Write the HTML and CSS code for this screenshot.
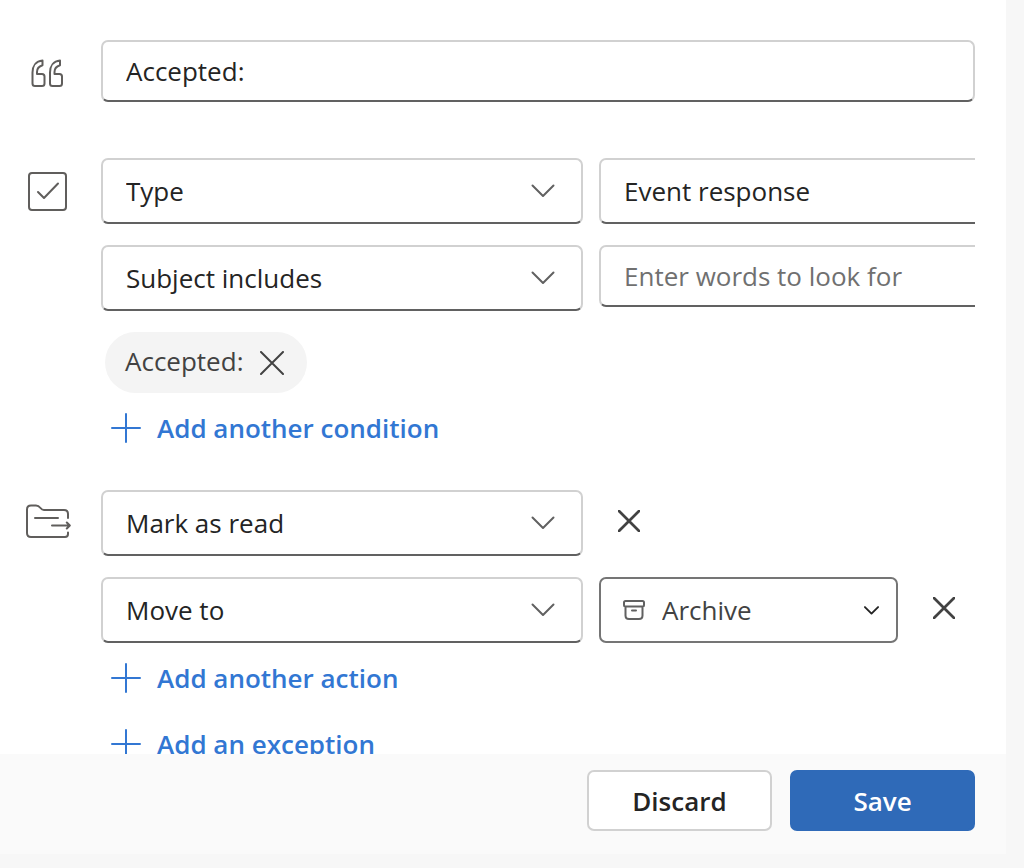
FILE: index.html
```html
<!DOCTYPE html>
<html lang="en">
<head>
<meta charset="utf-8">
<meta name="viewport" content="width=device-width, initial-scale=1">
<title>Edit rule</title>
<link rel="stylesheet" href="styles.css">
</head>
<body>
<svg class="sprite" aria-hidden="true">
  <symbol id="chevron" viewBox="0 0 24 14"><path d="M1.500 1.500 12 12 22.500 1.500"/></symbol>
  <symbol id="cross" viewBox="0 0 24 24"><path d="M1 1 23 23M23 1 1 23"/></symbol>
  <symbol id="plus" viewBox="0 0 30 30"><path d="M15 1V29M1 15H29"/></symbol>
</svg>
<form class="panel">
  <div class="rule">
    <section class="group">
      <svg class="group-icon" viewBox="0 0 48 48" aria-hidden="true"><path id="quote" d="M14.500 10.500C8 11 4.500 16 4.500 22.500V33.500Q4.500 36 7 36H14Q16.500 36 16.500 33.500V26.500Q16.500 24 14 24H9V22Q9 17 14.500 15.300Z"/><use href="#quote" x="17.500"/></svg>
      <div class="rows">
        <input class="field" type="text" aria-label="Rule name" value="Accepted:">
      </div>
    </section>
    <section class="group conditions">
      <svg class="group-icon" viewBox="0 0 48 48" aria-hidden="true"><rect x="1" y="5" width="37" height="37" rx="3"/><path d="M10 24 16 30 30 15.500"/></svg>
      <div class="rows">
        <div class="row">
          <div class="picker"><select class="field tall" aria-label="Condition 1"><option>Type</option></select><svg class="chevron"><use href="#chevron"/></svg></div>
          <div class="picker"><select class="field tall" aria-label="Message type"><option>Event response</option></select><svg class="chevron"><use href="#chevron"/></svg></div>
        </div>
        <div class="row">
          <div class="picker"><select class="field tall" aria-label="Condition 2"><option>Subject includes</option></select><svg class="chevron"><use href="#chevron"/></svg></div>
          <div class="picker"><input class="field" type="text" aria-label="Words to look for" placeholder="Enter words to look for"></div>
        </div>
        <div class="chip"><span>Accepted:</span><button class="icon-button" type="button" aria-label="Remove Accepted:"><svg class="cross"><use href="#cross"/></svg></button></div>
        <div class="links">
          <button class="add" type="button"><svg class="plus"><use href="#plus"/></svg>Add another condition</button>
        </div>
      </div>
    </section>
    <section class="group">
      <svg class="group-icon" viewBox="0 0 48 48" aria-hidden="true"><path d="M40 18V14Q40 10 36 10H16Q14 10 12.500 8Q10.500 5.500 8 5.500H3Q-1 5.500 -1 9.500V33Q-1 37 3 37H37Q40 37 40 34V32.500M7 18H30M24 25.500H41.500M38.800 22.500 41.800 25.500 38.800 28.500"/></svg>
      <div class="rows">
        <div class="row">
          <div class="picker"><select class="field tall" aria-label="Action 1"><option>Mark as read</option></select><svg class="chevron"><use href="#chevron"/></svg></div>
          <button class="icon-button remove" type="button" aria-label="Remove action 1"><svg class="cross"><use href="#cross"/></svg></button>
        </div>
        <div class="row">
          <div class="picker"><select class="field tall" aria-label="Action 2"><option>Move to</option></select><svg class="chevron"><use href="#chevron"/></svg></div>
          <div class="picker folder">
            <select class="field tall" aria-label="Folder"><option>Archive</option></select>
            <svg class="archive" viewBox="0 0 22 20" aria-hidden="true"><path d="M2.500 1H19.500Q21 1 21 2.500V5Q21 6.500 19.500 6.500H2.500Q1 6.500 1 5V2.500Q1 1 2.500 1ZM2.500 6.500V15.500Q2.500 19 6 19H16Q19.500 19 19.500 15.500V6.500M9 10.500H13"/></svg>
            <svg class="chevron"><use href="#chevron"/></svg>
          </div>
          <button class="icon-button remove" type="button" aria-label="Remove action 2"><svg class="cross"><use href="#cross"/></svg></button>
        </div>
        <div class="links">
          <button class="add" type="button"><svg class="plus"><use href="#plus"/></svg>Add another action</button>
          <button class="add" type="button"><svg class="plus"><use href="#plus"/></svg>Add an exception</button>
        </div>
      </div>
    </section>
  </div>
  <footer class="footer">
    <button class="button" type="button">Discard</button>
    <button class="button primary" type="submit">Save</button>
  </footer>
</form>
</body>
</html>
```
FILE: styles.css
```css
* { box-sizing: border-box; }

body {
  margin: 0;
  height: 100vh;
  padding: 0 18px 14px 0;
  background: #f7f7f7;
  color: #242424;
  font: 26px/36px "Open Sans", "Noto Sans", sans-serif;
}

button, input, select { font: inherit; color: inherit; }

svg {
  fill: none;
  stroke: currentColor;
  stroke-width: 2;
  stroke-linecap: round;
  stroke-linejoin: round;
}

.sprite { display: none; }

.panel {
  display: flex;
  flex-direction: column;
  height: 100%;
}

.rule {
  flex: 1;
  min-height: 0;
  overflow: hidden;
  padding: 40px 31px 0 28px;
  background: #fff;
}

.group {
  display: grid;
  grid-template-columns: 48px minmax(0, 1fr);
  column-gap: 25px;
  margin-bottom: 56px;
}

.conditions { margin-bottom: 29px; }

.group-icon {
  width: 48px;
  height: 48px;
  margin-top: 10px;
  overflow: visible;
  color: #605e5c;
}

.rows {
  display: flex;
  flex-direction: column;
  gap: 21px;
}

.row {
  display: flex;
  align-items: flex-start;
  gap: 16px;
  overflow: hidden;
}

.picker {
  display: grid;
  align-items: center;
  flex: 0 0 482px;
}

.picker > * { grid-area: 1 / 1; }

.field {
  width: 100%;
  height: 62px;
  padding: 0 23px;
  border: 2px solid #d1d1d1;
  border-bottom-color: #616161;
  border-radius: 7px;
  background: #fff;
  appearance: none;
}

.tall { height: 66px; }

.field::placeholder { color: #707070; opacity: 1; }

.chevron {
  justify-self: end;
  width: 24px;
  height: 14px;
  margin-right: 28px;
  color: #616161;
  pointer-events: none;
}

.folder { flex-basis: 299px; color: #424242; }

.folder .field {
  padding-left: 61px;
  border-color: #757575;
}

.folder .chevron {
  width: 15px;
  height: 9px;
  margin-right: 19px;
  color: #242424;
  stroke-width: 3;
}

.archive {
  width: 22px;
  height: 20px;
  margin-left: 24px;
  color: #616161;
  pointer-events: none;
}

.icon-button {
  display: grid;
  place-items: center;
  padding: 0;
  border: 0;
  background: none;
  color: #424242;
}

.cross { width: 24px; height: 24px; }

.remove { width: 60px; height: 62px; }

.remove .cross { width: 22px; height: 22px; stroke-width: 3; }

.chip {
  display: flex;
  align-items: center;
  align-self: flex-start;
  gap: 17px;
  height: 61px;
  margin-left: 4px;
  padding: 0 23px 0 20px;
  border-radius: 31px;
  background: #f4f4f4;
  color: #424242;
}

.chip span { padding-bottom: 4px; }

.links {
  display: flex;
  flex-direction: column;
  align-items: flex-start;
  margin-top: -19px;
}

.add {
  display: flex;
  align-items: center;
  gap: 16px;
  height: 66px;
  padding: 0 10px;
  border: 0;
  background: none;
  color: #3277d3;
  font-weight: 600;
}

.plus { width: 30px; height: 30px; }

.footer {
  display: flex;
  justify-content: flex-end;
  gap: 18px;
  padding: 16px 31px 23px;
  background: #fafafa;
}

.button {
  width: 185px;
  height: 61px;
  border: 2px solid #d1d1d1;
  border-radius: 7px;
  background: #fff;
  font-weight: 600;
}

.primary {
  border-color: #2f6ab8;
  background: #2f6ab8;
  color: #fff;
}
```
